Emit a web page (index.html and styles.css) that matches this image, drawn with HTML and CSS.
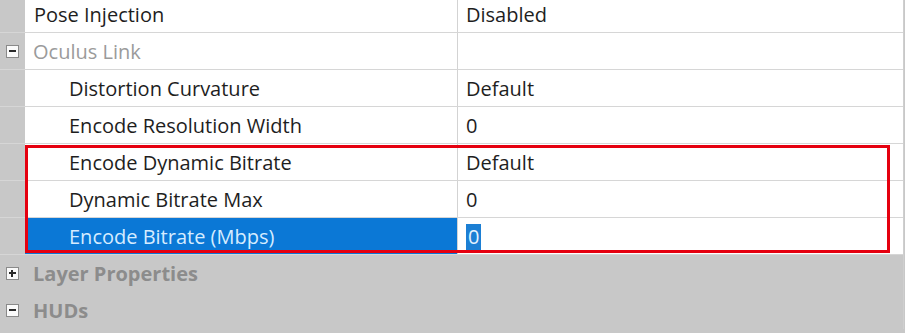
FILE: index.html
```html
<!DOCTYPE html>
<html lang="en">
<head>
  <meta charset="UTF-8">
  <title>Properties</title>
  <link rel="stylesheet" href="styles.css">
</head>
<body>
  <div class="grid">
    <div class="row">
      <div class="gutter"></div>
      <div class="name">Pose Injection</div>
      <div class="value">Disabled</div>
    </div>
    <div class="row category">
      <div class="gutter"><span class="toggle minus"></span></div>
      <div class="name">Oculus Link</div>
      <div class="value"></div>
    </div>
    <div class="row child">
      <div class="gutter"></div>
      <div class="name">Distortion Curvature</div>
      <div class="value">Default</div>
    </div>
    <div class="row child">
      <div class="gutter"></div>
      <div class="name">Encode Resolution Width</div>
      <div class="value">0</div>
    </div>
    <div class="row child">
      <div class="gutter"></div>
      <div class="name">Encode Dynamic Bitrate</div>
      <div class="value">Default</div>
    </div>
    <div class="row child">
      <div class="gutter"></div>
      <div class="name">Dynamic Bitrate Max</div>
      <div class="value">0</div>
    </div>
    <div class="row child selected">
      <div class="gutter"></div>
      <div class="name">Encode Bitrate (Mbps)</div>
      <div class="value"><span class="sel-text">0</span></div>
    </div>
    <div class="row group">
      <div class="gutter"><span class="toggle plus"></span></div>
      <div class="name">Layer Properties</div>
    </div>
    <div class="row group">
      <div class="gutter"><span class="toggle minus"></span></div>
      <div class="name">HUDs</div>
    </div>
  </div>
  <!-- annotation box -->
  <div class="highlight"></div>
</body>
</html>
```

FILE: styles.css
```css
body { margin: 0; background: #c8c8c8; font-family: "Open Sans", "Noto Sans", Arial, sans-serif; overflow: hidden; }
.grid { width: 903px; margin-top: -4px; border-right: 1px solid #cfcfcf; background: #fff; }
.row { display: flex; height: 36px; overflow: hidden; border-bottom: 1px solid #d6d6d6; font-size: 20px; color: #1e1e1e; background: #fff; }
.gutter { width: 25px; flex: none; background: #c8c8c8; display: flex; align-items: center; justify-content: center; }
.name { width: 423px; flex: none; padding-left: 9px; line-height: 38px; white-space: nowrap; overflow: hidden; }
.value { flex: 1; border-left: 1px solid #d3d3d3; padding-left: 8px; line-height: 38px; }
.child .name { padding-left: 44px; width: 388px; }
.category .name { color: #9b9b9b; padding-left: 8px; width: 424px; }
.selected .name { background: #0b78d6; color: #d6ecff; }
.sel-text { display: inline-block; background: #1c7fd4; color: #e6f3ff; line-height: 26px; padding: 0 2px; vertical-align: middle; margin-top: -3px; }
.group { background: #c8c8c8; border-bottom-color: #c8c8c8; }
.group .name { color: #8c8c8c; font-weight: bold; padding-left: 8px; width: 424px; background: #c8c8c8; }
.toggle { width: 11px; height: 11px; border: 1px solid #8a8a8a; background: #fafafa; position: relative; }
.toggle::before { content: ""; position: absolute; left: 2px; top: 4px; width: 7px; height: 2px; background: #2a2a2a; }
.toggle.plus::after { content: ""; position: absolute; left: 4px; top: 2px; width: 2px; height: 7px; background: #2a2a2a; }
.highlight { position: absolute; left: 25px; top: 145px; width: 859px; height: 102px; border: 3px solid #e5000f; }
```
